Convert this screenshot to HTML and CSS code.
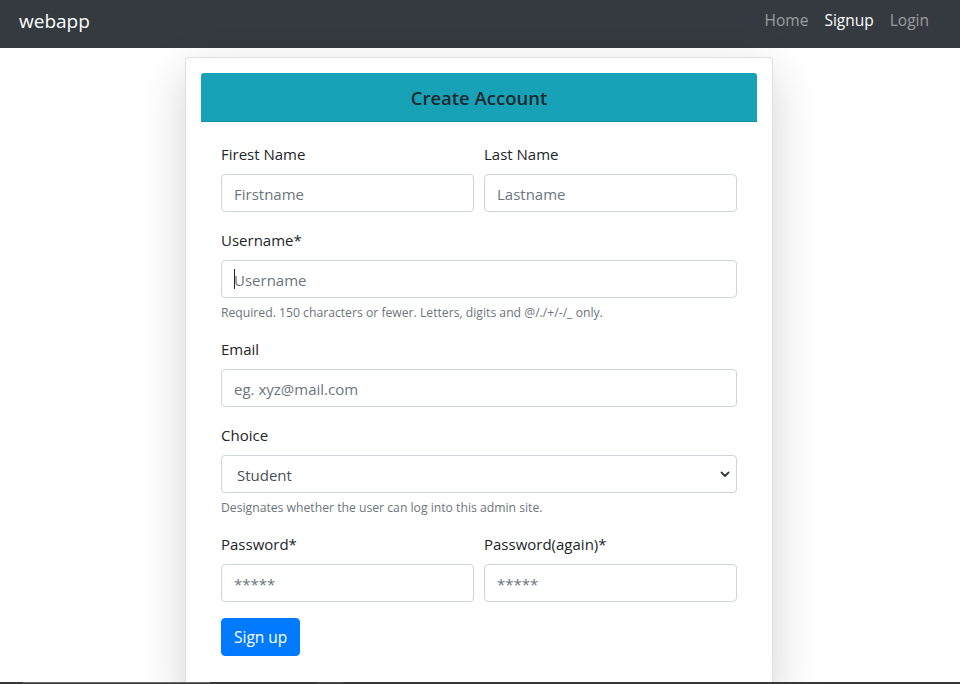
FILE: index.html
```html
<!DOCTYPE html>
<html lang="en">
<head>
<meta charset="utf-8">
<title>Signup - webapp</title>
<link rel="stylesheet" href="styles.css">
</head>
<body>
<nav class="navbar">
  <a class="brand" href="#">webapp</a>
  <ul class="nav">
    <li><a class="nav-link" href="#">Home</a></li>
    <li><a class="nav-link active" href="#">Signup</a></li>
    <li><a class="nav-link" href="#">Login</a></li>
  </ul>
</nav>
<main class="page">
  <div class="card">
    <div class="card-body">
      <div class="card-header"><h5 class="card-title">Create Account</h5></div>
      <form class="form">
        <div class="row">
          <div class="group">
            <label class="label">Firest Name</label>
            <input class="control" type="text" placeholder="Firstname">
          </div>
          <div class="group">
            <label class="label">Last Name</label>
            <input class="control" type="text" placeholder="Lastname">
          </div>
        </div>
        <div class="group">
          <label class="label">Username*</label>
          <div class="field">
            <input class="control" type="text" placeholder="Username">
            <span class="caret"></span>
          </div>
          <small class="help">Required. 150 characters or fewer. Letters, digits and @/./+/-/_ only.</small>
        </div>
        <div class="group">
          <label class="label">Email</label>
          <input class="control" type="email" placeholder="eg. xyz@mail.com">
        </div>
        <div class="group">
          <label class="label">Choice</label>
          <div class="field">
            <select class="control select">
              <option>Student</option>
              <option>Teacher</option>
            </select>
            <svg class="chevron" width="10" height="7" viewBox="0 0 10 7"><path d="M1.5 1.5 L5 5 L8.5 1.5" fill="none" stroke="#343a40" stroke-width="1.8" stroke-linecap="round" stroke-linejoin="round"/></svg>
          </div>
          <small class="help">Designates whether the user can log into this admin site.</small>
        </div>
        <div class="row">
          <div class="group">
            <label class="label">Password*</label>
            <input class="control" type="password" placeholder="*****">
          </div>
          <div class="group">
            <label class="label">Password(again)*</label>
            <input class="control" type="password" placeholder="*****">
          </div>
        </div>
        <button class="btn" type="button">Sign up</button>
      </form>
    </div>
  </div>
</main>
<div class="taskbar"><span class="seg seg-a"></span><span class="seg seg-b"></span></div>
</body>
</html>
```

FILE: styles.css
```css
* { box-sizing: border-box; }
html, body { margin: 0; padding: 0; }
body {
  font-family: "Open Sans", "Noto Sans", "Liberation Sans", sans-serif;
  font-size: 15px;
  line-height: 24px;
  color: #212529;
  background: #fff;
  height: 684px;
  overflow: hidden;
}
.navbar {
  height: 48px;
  background: #343a40;
  display: flex;
  align-items: center;
  justify-content: space-between;
  padding: 0 23px 0 19px;
}
.brand {
  color: #fff;
  font-size: 19px;
  line-height: 30px;
  text-decoration: none;
  margin-top: -6px;
}
.nav {
  list-style: none;
  margin: -9px 0 0;
  padding: 0;
  display: flex;
}
.nav-link {
  display: block;
  padding: 0 8px;
  color: rgba(255,255,255,.5);
  text-decoration: none;
  font-size: 15.5px;
}
.nav-link.active { color: #fff; }

.page { padding-top: 9px; }
.card {
  width: 588px;
  margin: 0 auto;
  transform: translateX(-1px);
  background: #fff;
  border: 1px solid rgba(0,0,0,.125);
  border-radius: 4px;
  box-shadow: 0 16px 48px rgba(0,0,0,.175);
  height: 640px;
}
.card-body { padding: 15px; }
.card-header {
  background: #17a2b8;
  border-bottom: 1px solid rgba(0,0,0,.125);
  border-radius: 3px 3px 0 0;
  padding: 12px 20px;
  text-align: center;
}
.card-title {
  margin: 0;
  padding-top: 1px;
  height: 24px;
  font-size: 18.5px;
  font-weight: 600;
  line-height: 24px;
  color: #1e2a30;
}
.form { padding: 20px 20px 0; }
.row {
  display: grid;
  grid-template-columns: 1fr 1fr;
  column-gap: 10px;
}
.group { margin-bottom: 16px; }
.label {
  display: block;
  height: 24px;
  margin-bottom: 8px;
  line-height: 24px;
}
.field { position: relative; }
.control {
  display: block;
  width: 100%;
  height: 38px;
  padding: 7px 12px 5px;
  font-family: inherit;
  font-size: 15px;
  line-height: 24px;
  color: #495057;
  background: #fff;
  border: 1px solid #ced4da;
  border-radius: 4px;
  outline: none;
}
.control::placeholder { color: #6c757d; opacity: 1; }
.select {
  appearance: none;
  -webkit-appearance: none;
  padding-left: 15px;
}
.chevron {
  position: absolute;
  right: 7px;
  top: 16px;
  pointer-events: none;
}
.caret {
  position: absolute;
  left: 13px;
  top: 9px;
  width: 1px;
  height: 20px;
  background: #212529;
}
.help {
  display: block;
  margin-top: 4px;
  padding-top: 1px;
  height: 19.2px;
  font-size: 12.2px;
  line-height: 19px;
  color: #6c757d;
}
.btn {
  display: inline-block;
  height: 38px;
  padding: 6px 12px;
  font-family: inherit;
  font-size: 15.5px;
  line-height: 24px;
  color: #fff;
  background: #007bff;
  border: 1px solid #007bff;
  border-radius: 4px;
}
.taskbar {
  position: fixed;
  left: 0;
  right: 0;
  bottom: 0;
  height: 2px;
  background: #383838;
}
.seg {
  position: absolute;
  top: 0;
  height: 1px;
}
.seg-a { left: 23px; width: 187px; background: #6a6a6a; }
.seg-b { left: 317px; width: 26px; background: #4a4a4a; }
```
